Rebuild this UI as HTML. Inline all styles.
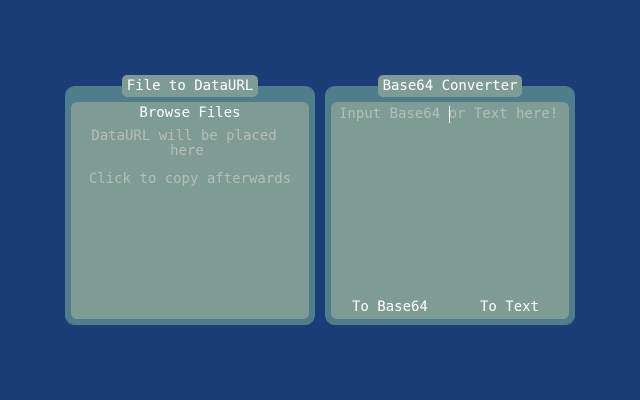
<!DOCTYPE html>
<html><head><style>
body{margin:0;width:640px;height:400px;background:#1b3d77;overflow:hidden;font-family:"DejaVu Sans Mono","Liberation Mono",monospace;font-size:14px;position:relative}
.o{position:absolute;top:86px;width:250px;height:239px;background:#4f7d8b;border-radius:10px}
.i{position:absolute;left:6px;top:16px;width:238px;height:217px;background:#7f9c94;border-radius:6px}
.t{position:absolute;top:75px;height:22px;background:#7f9c94;border-radius:5px;color:#fff;line-height:22px;text-align:center}
.a{position:absolute;white-space:nowrap;line-height:16px}
</style></head><body>
<div class="o" style="left:65px"><div class="i"></div></div>
<div class="o" style="left:325px"><div class="i"></div></div>
<div class="t" style="left:122px;width:136px">File to DataURL</div>
<div class="t" style="left:378px;width:144px">Base64 Converter</div>
<div class="a" style="left:71px;width:238px;text-align:center;top:105px;color:#fff">Browse Files</div>
<div class="a" style="left:65px;width:238px;text-align:center;top:129px;color:#b2bfb7;white-space:normal;line-height:15px;padding:0 14px;box-sizing:border-box">DataURL will be placed <span style="padding-left:6px">here</span></div>
<div class="a" style="left:71px;width:238px;text-align:center;top:171px;color:#b2bfb7">Click to copy afterwards</div>
<div class="a" style="left:339px;top:106px;color:#b2bfb7">Input Base64 or Text here!</div>
<div style="position:absolute;left:449px;top:106px;width:1px;height:17px;background:#fff"></div>
<div class="a" style="left:352px;top:299px;color:#fff">To Base64</div>
<div class="a" style="left:480px;top:299px;color:#fff">To Text</div>
</body></html>
